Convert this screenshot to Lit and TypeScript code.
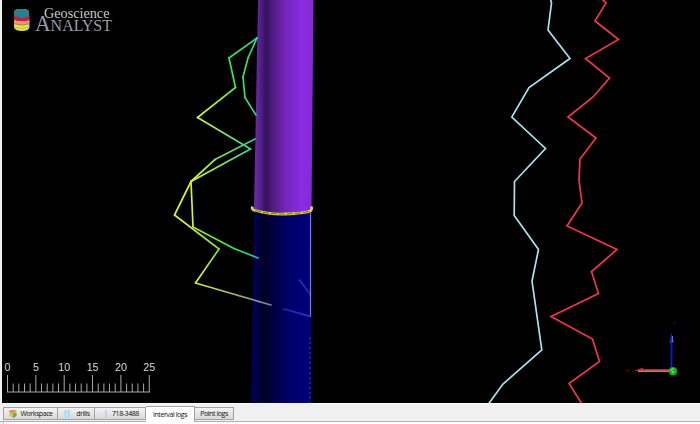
import { LitElement, html, svg, css } from "lit";
import { customElement, state } from "lit/decorators.js";
import { classMap } from "lit/directives/class-map.js";

const YELLOW = "#dcee38";
const LIME = "#a4e03c";
const GREEN = "#35e64a";
const TEAL = "#2cdc8e";

type Segment = [number, number, number, number, string, string];

const wrapLogs: Segment[] = [
  [257, 38, 229, 58, "#35d8a0", GREEN],
  [229, 58, 235.5, 87.5, GREEN, "#4fdf42"],
  [235.5, 87.5, 197.5, 117.5, "#5fe040", YELLOW],
  [197.5, 117.5, 250.5, 149, YELLOW, TEAL],
  [250.5, 149, 191, 181.5, TEAL, YELLOW],
  [191, 181.5, 174.5, 215, YELLOW, YELLOW],
  [174.5, 215, 219, 249, YELLOW, "#85e03a"],
  [219, 249, 195.5, 283, "#85e03a", YELLOW],
  [195.5, 283, 271, 305, "#d5e83c", "#7880a8"],
  [257, 38, 248, 58, "#35d8a0", "#35dd68"],
  [248, 58, 243, 77, "#35dd68", GREEN],
  [243, 77, 245, 97.5, GREEN, "#35df60"],
  [245, 97.5, 256, 115, "#35df60", "#30c8a8"],
  [255, 139, 215, 159.5, "#30c8a8", "#90df40"],
  [215, 159.5, 191, 181.5, "#90df40", YELLOW],
  [191, 181.5, 193, 227, YELLOW, YELLOW],
  [193, 227, 234, 248.5, LIME, GREEN],
  [234, 248.5, 258, 258, GREEN, "#20c8a8"],
  [284, 309, 310.5, 316.5, "#2028c0", "#3038c8"],
  [299.5, 280, 310, 294, "#2830c8", "#2028b0"],
];

const paleLog =
  "550.5,-1 551.5,3 548,30 570,58.5 529,87.5 511.8,117 545.5,148.5 514.5,181.5 514.2,215.5 538.5,249.5 532,281 541.8,350 503,384 488.5,404";
const redLog =
  "602,-1 606,3 595,21 618.5,39.5 585.5,58.5 609.5,78 593,97 568,117 596,138 580,159 579,180 582,203 567,226 617,249.5 591.5,271.5 598.5,293.5 551,316.5 592.5,339 599.5,361.5 569,383.5 582,404";

@customElement("drill-scene")
export class DrillScene extends LitElement {
  static styles = css`
    :host { display: block; background: #000; overflow: hidden; }
    svg { display: block; }
    .line { fill: none; stroke-width: 1.7; }
    .brand { font-family: "Liberation Serif", serif; }
    .scale { font: 10.6px "Liberation Sans", sans-serif; fill: #d8d8d8; text-anchor: middle; }
    .axis { font: 6px "Liberation Sans", sans-serif; }
  `;

  private logo() {
    return svg`
      <clipPath id="drum"><path d="M14 12 Q14 9 21.500 9 Q29 9 29 12 L29.500 27 Q29 31 22 31 Q14.500 31 14 27Z"/></clipPath>
      <g clip-path="url(#drum)">
        <rect x="13" y="8" width="18" height="24" fill="#e2df4e"/>
        <rect x="13" y="8" width="18" height="9" fill="#23808e"/>
        <path d="M13 15.500 Q22 19 31 15.500 V20 Q22 23 13 20Z" fill="#c9204f"/>
        <path d="M13 20 Q22 23 31 20 V23 Q22 26 13 23Z" fill="#ed9b70"/>
        <path d="M13 18 Q22 21 31 18 M13 23.500 Q22 26.500 31 23.500" fill="none" stroke="#6b3a35" stroke-width=".5"/>
        <path d="M13 27 Q22 30 31 27" fill="none" stroke="#b0a437" stroke-width=".5"/>
      </g>
      <text class="brand" x="44" y="18" font-size="14" textLength="65.500" lengthAdjust="spacingAndGlyphs" fill="#c8c8c8">Geoscience</text>
      <text class="brand" x="35" y="31" textLength="77" lengthAdjust="spacingAndGlyphs" fill="#979da6"><tspan font-size="23">A</tspan><tspan font-size="17">NALYST</tspan></text>`;
  }

  private ruler() {
    const ticks = Array.from({ length: 26 }, (_, i) => i);
    const at = (i: number) => 7.5 + i * 5.67;
    return svg`
      <path d=${ticks.map((i) => `M${at(i)} ${i % 5 ? 383.5 : 375}V392`).join("")} stroke="#a8a8a8" fill="none"/>
      <path d="M7 392H150" stroke="#a8a8a8"/>
      ${[0, 5, 10, 15, 20, 25].map((n) => svg`<text class="scale" x=${at(n)} y="370.500">${n}</text>`)}`;
  }

  render() {
    return html`<svg width="698" height="403" viewBox="2 0 698 403">
      <defs>
        <linearGradient id="violet">
          <stop offset="0" stop-color="#6c2cac"/><stop offset=".08" stop-color="#5c2299"/>
          <stop offset=".2" stop-color="#35125c"/><stop offset=".32" stop-color="#511c86"/>
          <stop offset=".55" stop-color="#7427bd"/><stop offset=".8" stop-color="#8a2be0"/>
          <stop offset="1" stop-color="#842ad5"/>
        </linearGradient>
        <linearGradient id="navy">
          <stop offset="0" stop-color="#000058"/><stop offset=".1" stop-color="#000046"/>
          <stop offset=".22" stop-color="#000025"/><stop offset=".38" stop-color="#000044"/>
          <stop offset=".65" stop-color="#00006a"/><stop offset="1" stop-color="#00007a"/>
        </linearGradient>
        ${wrapLogs.map(
          ([x1, y1, x2, y2, from, to], i) => svg`<linearGradient id=${`s${i}`} gradientUnits="userSpaceOnUse" x1=${x1} y1=${y1} x2=${x2} y2=${y2}>
            <stop offset="0" stop-color=${from}/><stop offset="1" stop-color=${to}/></linearGradient>`
        )}
      </defs>
      <path d="M254 209 L311.500 209 L311 403 H251Z" fill="url(#navy)"/>
      <path d="M258 0H313.500L311.500 211Q283 216 254 209Z" fill="url(#violet)"/>
      ${wrapLogs.map(
        ([x1, y1, x2, y2], i) => svg`<path class="line" stroke-linecap="round" d=${`M${x1} ${y1}L${x2} ${y2}`} stroke=${`url(#s${i})`}/>`
      )}
      <path d="M310.500 213V316" stroke="#7c80b8" stroke-width="1.200"/>
      <path d="M310 337V403" stroke="#4848a0" stroke-dasharray="2 3"/>
      <path d="M252.500 206.500Q251.500 209 253.500 210Q270 214.500 284 214Q304 213.500 310.500 211Q312.500 208.500 311 206.500" fill="none" stroke="#dcd048" stroke-width="2.800"/>
      <path d="M255 210.500Q270 214.300 284 214Q303 213.500 310 211" fill="none" stroke="#6b6418" stroke-width=".9" stroke-dasharray="6 2"/>
      <polyline class="line" points=${paleLog} stroke="#a9e2f0"/>
      <polyline class="line" points=${redLog} stroke="#ee384a"/>
      ${this.logo()} ${this.ruler()}
      <path d="M671.500 370V343" stroke="#1717c5" stroke-width="2"/>
      <path d="M669.500 343L671.500 333L674 343Z" fill="#2424dd"/>
      <path d="M672.500 336V342" stroke="#8585d0" stroke-width=".8"/>
      <path d="M635 370.500L643 367.500V369H670V371H636Z" fill="#e01c22"/>
      <path d="M638 371.300H669" stroke="#a9857c" stroke-width="1.600"/>
      <circle cx="673" cy="371.300" r="4.200" fill="#16ad20"/>
      <path d="M670.500 370.500l3-2M672 373l2-2" stroke="#6cf06a" stroke-width="1.300"/>
      <text class="axis" x="626" y="372" fill="#991018">x</text>
      <text class="axis" x="673" y="325" fill="#161675">z</text>
    </svg>`;
  }
}

const icons = [
  svg`<path d="M1.500 1.500Q5 .5 8.500 1.500V6.500Q5 10.500 1.500 6.500Z" fill="#e0c04a"/><path d="M1.500 1.500Q5 .5 8.500 1.500L5 3.500H1.500Z" fill="#e08a60"/><path d="M5 4H8.500V6.500Q7 8.500 5 9Z" fill="#55b268"/>`,
  svg`<rect x="1.500" y="1" width="7" height="8" fill="#c2e2f6"/><path d="M3.500 1V9M6.500 1V9" stroke="#a9d6f0"/>`,
  svg`<path d="M5 1V9" stroke="#9bcde8" stroke-width="1.200"/>`,
];

@customElement("app-root")
export class AppRoot extends LitElement {
  static styles = css`
    :host { display: flex; flex-direction: column; width: 700px; height: 424px; overflow: hidden; background: #f0f0f0; }
    drill-scene { height: 403px; flex: none; margin-left: 2px; }
    .tabs {
      display: flex; align-items: flex-end; height: 17px; padding: 0 3px; flex: none;
      border-top: 1px solid #fafafa; border-bottom: 1px solid #b0b0b2; box-sizing: content-box;
    }
    .tab {
      box-sizing: border-box; display: flex; align-items: center; justify-content: center; gap: 2px;
      height: 13px; margin: 0 0 1px; padding: 0; border: 1px solid #a0a2a5; border-left-width: 0;
      background: linear-gradient(#f3f3f3, #d9d9d9);
      font: 7px "Open Sans", sans-serif; letter-spacing: -0.42px; color: #111; white-space: nowrap;
    }
    .tab:first-child { border-left-width: 1px; }
    .tab svg { flex: none; }
    .workspace { width: 55px; }
    .drills { width: 37px; gap: 4px; }
    .hole { width: 51px; gap: 1px; }
    .interval { width: 49px; }
    .point { width: 39px; }
    .active { height: 16px; margin-bottom: -1px; padding-bottom: 1px; background: #fff; border-bottom: 0; }
    .panel { flex: 1; margin-left: 3px; background: #fff; border-left: 1px solid #c4c4c4; }
  `;

  @state() private active = 3;

  private tabs = [
    { label: "Workspace", kind: "workspace" },
    { label: "drills", kind: "drills" },
    { label: "718-3488", kind: "hole" },
    { label: "Interval logs", kind: "interval" },
    { label: "Point logs", kind: "point" },
  ];

  render() {
    return html`<drill-scene></drill-scene>
      <div class="tabs">
        ${this.tabs.map(
          (tab, i) => html`<button
            class=${classMap({ tab: true, [tab.kind]: true, active: i === this.active })}
            @click=${() => (this.active = i)}
          >${icons[i] ? html`<svg width="10" height="10" viewBox="0 0 10 10">${icons[i]}</svg>` : ""}<span>${tab.label}</span></button>`
        )}
      </div>
      <div class="panel"></div>`;
  }
}
